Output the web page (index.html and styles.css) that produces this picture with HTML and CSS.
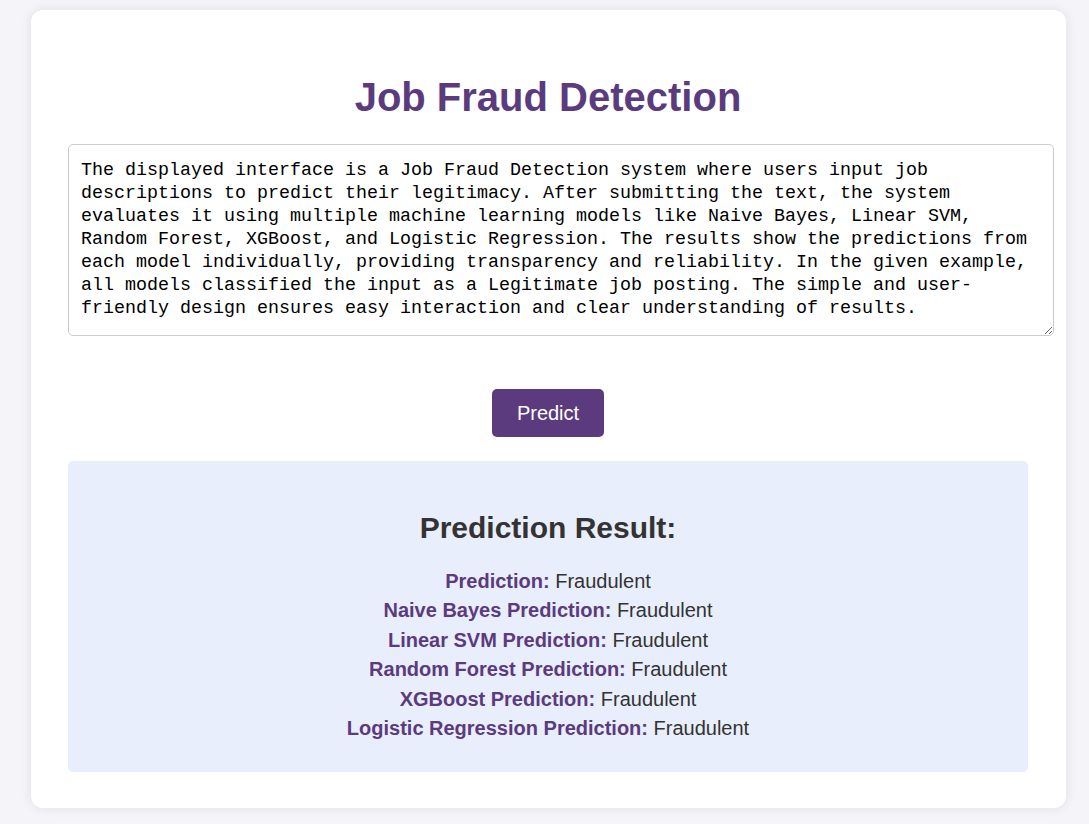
FILE: index.html
```html
<!DOCTYPE html>
<html lang="en">
<head>
<meta charset="utf-8">
<title>Job Fraud Detection</title>
<link rel="stylesheet" href="styles.css">
</head>
<body>
<div class="card">
  <h1 class="title">Job Fraud Detection</h1>
  <form class="form">
    <textarea class="input">The displayed interface is a Job Fraud Detection system where users input job descriptions to predict their legitimacy. After submitting the text, the system evaluates it using multiple machine learning models like Naive Bayes, Linear SVM, Random Forest, XGBoost, and Logistic Regression. The results show the predictions from each model individually, providing transparency and reliability. In the given example, all models classified the input as a Legitimate job posting. The simple and user-friendly design ensures easy interaction and clear understanding of results.</textarea>
    <div class="actions">
      <button type="button" class="btn">Predict</button>
    </div>
  </form>
  <div class="result">
    <h2 class="result-title">Prediction Result:</h2>
    <p class="row"><strong class="label">Prediction:</strong> Fraudulent</p>
    <p class="row"><strong class="label">Naive Bayes Prediction:</strong> Fraudulent</p>
    <p class="row"><strong class="label">Linear SVM Prediction:</strong> Fraudulent</p>
    <p class="row"><strong class="label">Random Forest Prediction:</strong> Fraudulent</p>
    <p class="row"><strong class="label">XGBoost Prediction:</strong> Fraudulent</p>
    <p class="row"><strong class="label">Logistic Regression Prediction:</strong> Fraudulent</p>
  </div>
</div>
</body>
</html>
```
FILE: styles.css
```css
html, body {
  margin: 0;
  padding: 0;
}
body {
  background: #f4f4f9;
  font-family: "Liberation Sans", Arial, sans-serif;
  color: #333;
  padding: 10px 0 16px 31px;
}
.card {
  width: 1035px;
  box-sizing: border-box;
  background: #fff;
  border-radius: 12px;
  box-shadow: 0 0 12px rgba(0, 0, 0, 0.09);
  padding: 35px 38px 36px 37px;
}
.title {
  margin: 29px 0 24px;
  text-align: center;
  font-size: 40px;
  line-height: 46px;
  font-weight: bold;
  color: #5b3b7e;
}
.form {
  margin: 0;
}
.input {
  display: block;
  width: 960px;
  height: 166px;
  margin: 0;
  padding: 14px 12px 10px;
  border: 1px solid #ccc;
  border-radius: 5px;
  font-family: "Liberation Mono", "DejaVu Sans Mono", monospace;
  font-size: 18.33px;
  line-height: 23px;
  color: #000;
  resize: vertical;
  box-sizing: content-box;
}
.actions {
  display: flex;
  justify-content: center;
  padding: 53px 0 24px;
}
.btn {
  background: #5b3b7e;
  color: #fff;
  border: none;
  border-radius: 5px;
  padding: 12px 25px;
  font-family: "Liberation Sans", Arial, sans-serif;
  font-size: 20px;
  line-height: 24px;
  cursor: pointer;
}
.result {
  background: #e8eefb;
  border-radius: 5px;
  padding: 25px 20px 25px;
  text-align: center;
}
.result-title {
  margin: 25px 0 22px;
  font-size: 30px;
  line-height: 34px;
  font-weight: bold;
  color: #333;
}
.row {
  margin: 0;
  font-size: 20px;
  line-height: 29.4px;
  color: #333;
}
.row:last-child {
  margin-bottom: 4px;
}
.label {
  color: #5b3b7e;
  font-weight: bold;
}
```
